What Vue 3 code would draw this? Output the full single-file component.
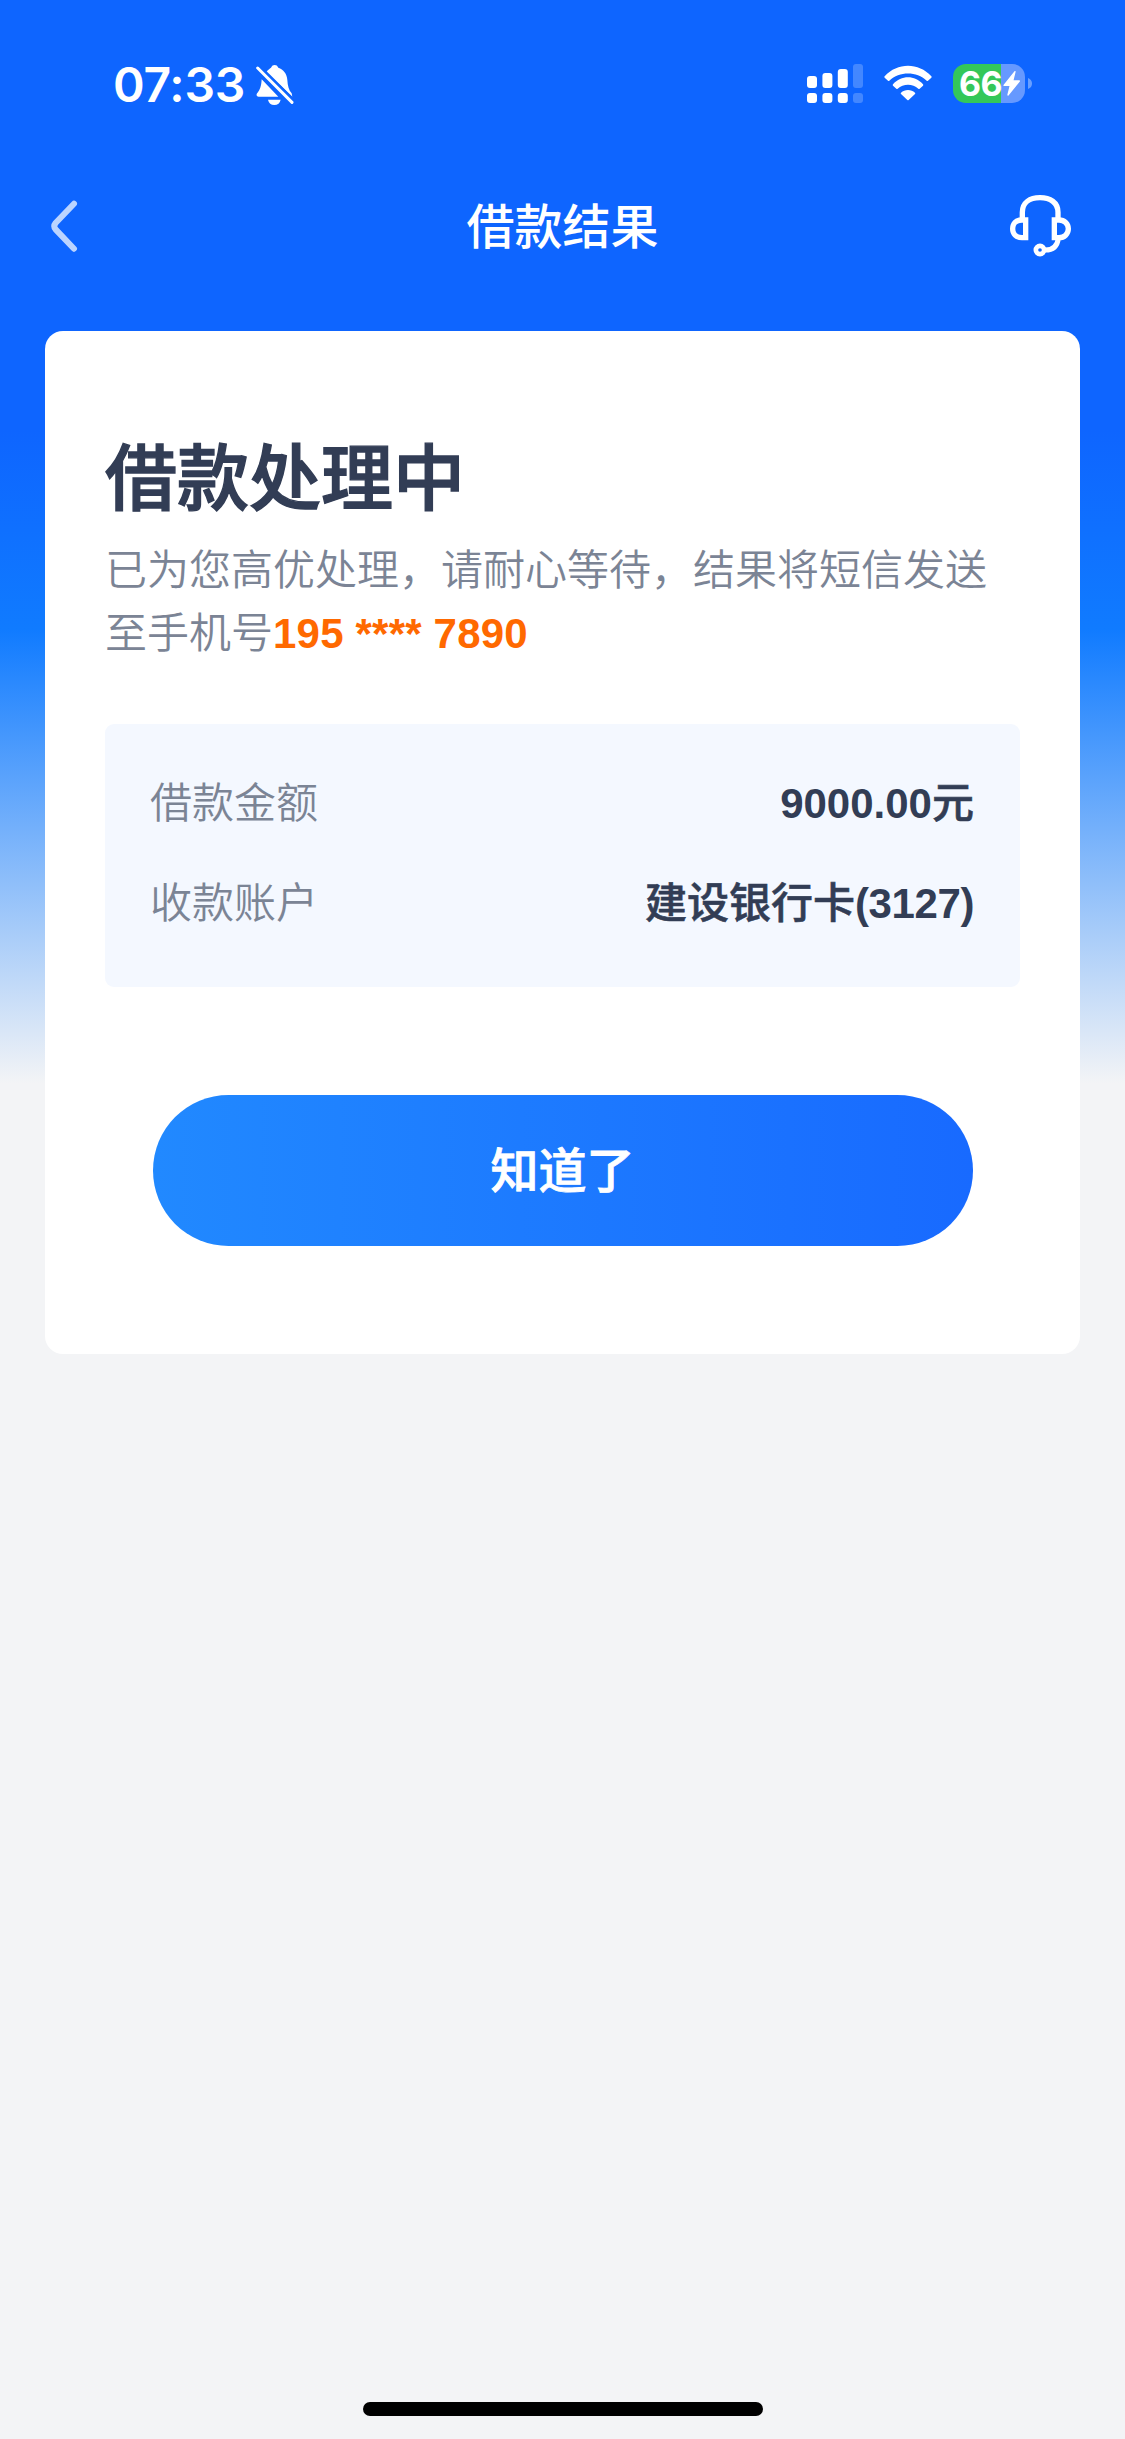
<script setup>
const columns = [
  { x: 0, top: 12, faded: false },
  { x: 15.4, top: 9, faded: false },
  { x: 30.8, top: 5, faded: false },
  { x: 46, top: 0, faded: true },
]
const rows = [
  { label: '借款金额', number: '9000.00', text: '元', numberFirst: true },
  { label: '收款账户', number: '(3127)', text: '建设银行卡', numberFirst: false },
]
</script>

<template>
  <div class="page">
    <header class="status">
      <div class="clock">
        <span class="time">07:33</span>
        <svg class="bell" width="38" height="42" viewBox="0 0 114 126">
          <path fill="#fff" d="M31 24C36 17 41 14 45 11C48 5 51 3 56 3S64 5 67 11C82 16 93 29 94 48C95 65 98 78 107 88L109 98Z" />
          <path fill="#fff" d="M17 46L67 98H8C1 98 0 91 4 87C12 78 16 67 17 46Z" />
          <path fill="#fff" d="M36 107H74C72 117 65 123 55 123S38 117 36 107Z" />
          <path stroke="#0e65ff" stroke-width="6" d="M10 4L113 107" />
          <path stroke="#fff" stroke-width="9" stroke-linecap="round" d="M5 12L108 115" />
        </svg>
      </div>
      <div class="indicators">
        <svg class="signal" width="56" height="39" viewBox="0 0 56 39">
          <g v-for="c in columns" :key="c.x" fill="#fff" :opacity="c.faded ? 0.22 : 1">
            <rect :x="c.x" :y="c.top" width="10" :height="24 - c.top" rx="3" />
            <rect :x="c.x" y="29" width="10" height="10" rx="3" />
          </g>
        </svg>
        <svg class="wifi" width="48" height="36" viewBox="0 0 144 108">
          <path fill="#fff" d="M2 34C40 -8 104 -8 142 34Q144 36 142 38L132 47Q130 49 128 47C98 18 46 18 16 47Q14 49 12 47L2 38Q0 36 2 34Z" />
          <path fill="#fff" d="M27 58C52 30 92 30 117 58Q119 60 117 62L107 71Q105 73 103 71C86 55 58 55 41 71Q39 73 37 71L27 62Q25 60 27 58Z" />
          <path fill="#fff" d="M51 83C62 72 82 72 93 83Q95 85 93 87L74 105Q72 107 70 105L51 87Q49 85 51 83Z" />
        </svg>
        <div class="battery">
          <span class="percent">66</span>
          <svg class="bolt" width="17" height="25" viewBox="0 0 51 75">
            <path fill="#fff" stroke="#fff" stroke-width="4" stroke-linejoin="round" d="M36 2L3 43H22L15 72L49 30H29Z" />
          </svg>
        </div>
        <svg class="cap" width="4" height="11" viewBox="0 0 4 11">
          <path fill="#fff" opacity=".38" d="M0 0Q4 1.5 4 5.5T0 11Z" />
        </svg>
      </div>
    </header>

    <nav class="nav">
      <svg class="back" width="28" height="52" viewBox="0 0 28 52">
        <path fill="none" stroke="#fff" stroke-opacity=".72" stroke-width="6" stroke-linecap="round" d="M24 3.7L5.6 23Q3 26.2 5.6 29.4L24 48.7" />
      </svg>
      <h1 class="nav-title">借款结果</h1>
      <svg class="service" width="61" height="62" viewBox="0 0 183 186" fill="none" stroke="#fff" stroke-width="16">
        <path d="M37 72V52C37 22 60 8 90 8S144 22 144 52V72" />
        <path d="M47 75V128H36C18 128 8 117 8 101.500S18 75 36 75Z" />
        <path d="M133 75V128H147C163 128 175 117 175 101.500S163 75 147 75Z" />
        <path stroke-width="15" d="M145 130C142 154 127 165 106 165" />
        <circle cx="90" cy="165" r="12.500" stroke-width="14" />
      </svg>
    </nav>

    <main class="card">
      <h2 class="heading">借款处理中</h2>
      <p class="desc">已为您高优处理，请耐心等待，结果将短信发送<br>至手机号<b class="phone">195 **** 7890</b></p>
      <dl class="details">
        <div v-for="r in rows" :key="r.label" class="row">
          <dt>{{ r.label }}</dt>
          <dd>
            <b v-if="r.numberFirst">{{ r.number }}</b><span>{{ r.text }}</span><b v-if="!r.numberFirst">{{ r.number }}</b>
          </dd>
        </div>
      </dl>
      <button class="confirm" type="button">知道了</button>
    </main>

    <div class="home-bar"></div>
  </div>
</template>

<style>
body {
  margin: 0;
  background: #f3f4f6;
}
</style>

<style scoped>
.page {
  box-sizing: border-box;
  width: 1125px;
  height: 2439px;
  display: flex;
  flex-direction: column;
  overflow: hidden;
  font-family: "Liberation Sans", "Noto Sans CJK SC", sans-serif;
  background: linear-gradient(180deg, #0e65ff 0, #0e65ff 430px, #107bff 630px, #f3f4f6 1083px);
}
.status {
  box-sizing: border-box;
  height: 132px;
  padding: 64px 93px 0 113px;
  display: flex;
  justify-content: space-between;
  align-items: flex-start;
}
.clock {
  display: flex;
}
.time {
  width: 143px;
  padding-top: 1px;
  font: 600 48px/40px Inter, sans-serif;
  letter-spacing: -0.2px;
  color: #fff;
  white-space: nowrap;
}
.indicators {
  display: flex;
}
.wifi {
  margin: 1px 0 0 21px;
}
.battery {
  box-sizing: border-box;
  width: 72px;
  height: 39px;
  margin-left: 21px;
  padding-left: 6px;
  display: flex;
  align-items: center;
  border-radius: 13px;
  background: linear-gradient(90deg, #34c759 48px, #6699ff 48px);
}
.percent {
  width: 44px;
  font: 700 34px/39px Inter, sans-serif;
  letter-spacing: -0.5px;
  color: #fff;
}
.bolt {
  flex: none;
}
.cap {
  margin: 14px 0 0 3px;
}
.nav {
  box-sizing: border-box;
  height: 199px;
  padding: 46px 54px 0 50px;
  display: flex;
  justify-content: space-between;
  align-items: flex-start;
}
.back {
  margin-top: 22px;
}
.nav-title {
  margin: 14px 0 0 37px;
  font-size: 48px;
  line-height: 72px;
  font-weight: 500;
  color: #fff;
}
.service {
  margin-top: 17px;
}
.card {
  box-sizing: border-box;
  width: 1035px;
  height: 1023px;
  margin: 0 45px;
  padding: 94px 60px 0;
  border-radius: 18px;
  background: #fff;
}
.heading {
  margin: 0;
  font-size: 72px;
  line-height: 108px;
  font-weight: 500;
  color: #323d55;
  -webkit-text-stroke: 1.4px #323d55;
}
.desc {
  margin: 6px 0 0;
  font-size: 42px;
  line-height: 63px;
  font-weight: 350;
  color: #7b8495;
}
.phone {
  font-weight: 700;
  letter-spacing: 0.2px;
  color: #ff6900;
}
.details {
  box-sizing: border-box;
  height: 263px;
  margin: 59px 0 0;
  padding: 48px 46px 0 45px;
  display: flex;
  flex-direction: column;
  gap: 37px;
  border-radius: 9px;
  background: #f4f8ff;
}
.row {
  display: flex;
  justify-content: space-between;
  font-size: 42px;
  line-height: 63px;
}
.row dt {
  font-weight: 350;
  color: #7b8495;
}
.row dd {
  margin: 0;
  font-weight: 500;
  color: #323d55;
}
.row span {
  -webkit-text-stroke: 0.6px #323d55;
}
.row b {
  font-weight: 700;
}
.row span + b {
  letter-spacing: -0.4px;
}
.confirm {
  display: block;
  width: 820px;
  height: 151px;
  margin: 108px auto 0;
  padding: 0 0 8px;
  border: 0;
  border-radius: 76px;
  font: inherit;
  font-size: 48px;
  font-weight: 500;
  color: #fff;
  -webkit-text-stroke: 0.8px #fff;
  background: linear-gradient(90deg, #2189ff, #186aff);
}
.home-bar {
  width: 400px;
  height: 14px;
  margin: auto auto 23px;
  border-radius: 7px;
  background: #000;
}
</style>
